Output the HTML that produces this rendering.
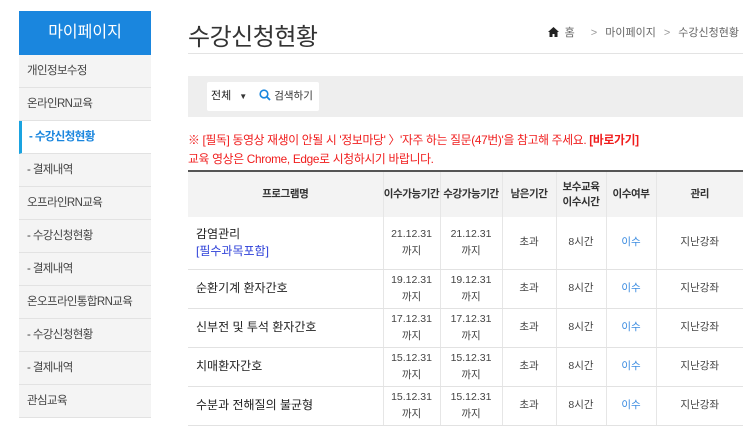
<!DOCTYPE html>
<html><head><meta charset="utf-8">
<style>
*{margin:0;padding:0;box-sizing:border-box}
body{width:743px;height:424px;overflow:hidden;background:#fff;font-family:"Liberation Sans","Noto Sans CJK KR",sans-serif;color:#333;position:relative}
.side{position:absolute;left:19px;top:11px;width:132px}
.side .hd{height:44px;background:#1a86de;color:#fff;font-size:16px;text-align:center;line-height:44px}
.side .it{height:33px;background:#f4f4f4;border-bottom:1px solid #e2e2e2;font-size:11.5px;line-height:32px;padding-left:8px;color:#444;letter-spacing:-0.6px}
.side .it.act{background:#fff;border-left:3px solid #1aa3e0;color:#1a86de;font-weight:bold;padding-left:7px}
.title{position:absolute;left:188px;top:17px;font-size:24px;color:#333;letter-spacing:-0.5px}
.hline{position:absolute;left:188px;right:0;top:53px;height:1px;background:#e3e3e3}
.bc{position:absolute;right:4px;top:24px;font-size:11px;color:#666}
.bc span{margin:0 8px;color:#999}
.sbar{position:absolute;left:188px;right:0;top:76px;height:41px;background:#eee}
.sbox{position:absolute;left:19px;top:6px;width:112px;height:29px;background:#fff;border-radius:2px;font-size:11px;line-height:29px}
.note{position:absolute;left:188px;top:131px;font-size:11.8px;color:#f01c1c;line-height:19px;letter-spacing:-0.3px}
table{position:absolute;left:188px;top:170px;width:555px;border-collapse:collapse;border-top:2px solid #555;font-size:10.5px}
th{background:#f3f3f3;height:46px;font-weight:bold;color:#333;border-left:1px solid #e6e6e6;line-height:15px;letter-spacing:-0.4px}
td{border-left:1px solid #e6e6e6;border-bottom:1px solid #e2e2e2;text-align:center;height:39px;color:#444;line-height:17px}
th:first-child,td:first-child{border-left:none}
td.n{text-align:left;padding-left:8px;font-size:12px;color:#222}
.blue{color:#3a8be0}
</style></head><body>
<div class="side">
<div class="hd">마이페이지</div>
<div class="it">개인정보수정</div>
<div class="it">온라인RN교육</div>
<div class="it act">- 수강신청현황</div>
<div class="it">- 결제내역</div>
<div class="it">오프라인RN교육</div>
<div class="it">- 수강신청현황</div>
<div class="it">- 결제내역</div>
<div class="it">온오프라인통합RN교육</div>
<div class="it">- 수강신청현황</div>
<div class="it">- 결제내역</div>
<div class="it">관심교육</div>
</div>
<div class="title">수강신청현황</div>
<div class="bc"><svg width="11" height="10" viewBox="0 0 11 10" style="vertical-align:-1px"><path d="M5.5 0L0 5h1.5v5h3V7h2v3h3V5H11z" fill="#222"/></svg><span style="margin-left:6px;color:#666">홈</span><span>&gt;</span>마이페이지<span>&gt;</span>수강신청현황</div>
<div class="hline"></div>
<div class="sbar"><div class="sbox"><span style="margin-left:4px;color:#222">전체</span><span style="font-size:8px;margin-left:8px">▼</span><svg width="12" height="12" viewBox="0 0 12 12" style="margin-left:12px;vertical-align:-2px"><circle cx="5" cy="5" r="3.8" fill="none" stroke="#1a86de" stroke-width="1.6"/><path d="M8 8l3 3" stroke="#1a86de" stroke-width="1.8"/></svg> <span style="font-size:10.5px">검색하기</span></div></div>
<div class="note">※ [필독] 동영상 재생이 안될 시 '정보마당' 〉'자주 하는 질문(47번)'을 참고해 주세요. <b>[바로가기]</b><br>교육 영상은 Chrome, Edge로 시청하시기 바랍니다.</div>
<table>
<tr><th style="width:195px">프로그램명</th><th style="width:57px">이수가능기간</th><th style="width:62px">수강가능기간</th><th style="width:54px">남은기간</th><th style="width:50px">보수교육<br>이수시간</th><th style="width:50px">이수여부</th><th>관리</th></tr>
<tr><td class="n" style="height:52px">감염관리<br><span style="color:#2b3ed8">[필수과목포함]</span></td><td>21.12.31<br>까지</td><td>21.12.31<br>까지</td><td>초과</td><td>8시간</td><td class="blue">이수</td><td>지난강좌</td></tr>
<tr><td class="n">순환기계 환자간호</td><td>19.12.31<br>까지</td><td>19.12.31<br>까지</td><td>초과</td><td>8시간</td><td class="blue">이수</td><td>지난강좌</td></tr>
<tr><td class="n">신부전 및 투석 환자간호</td><td>17.12.31<br>까지</td><td>17.12.31<br>까지</td><td>초과</td><td>8시간</td><td class="blue">이수</td><td>지난강좌</td></tr>
<tr><td class="n">치매환자간호</td><td>15.12.31<br>까지</td><td>15.12.31<br>까지</td><td>초과</td><td>8시간</td><td class="blue">이수</td><td>지난강좌</td></tr>
<tr><td class="n">수분과 전해질의 불균형</td><td>15.12.31<br>까지</td><td>15.12.31<br>까지</td><td>초과</td><td>8시간</td><td class="blue">이수</td><td>지난강좌</td></tr>
</table>
</body></html>
